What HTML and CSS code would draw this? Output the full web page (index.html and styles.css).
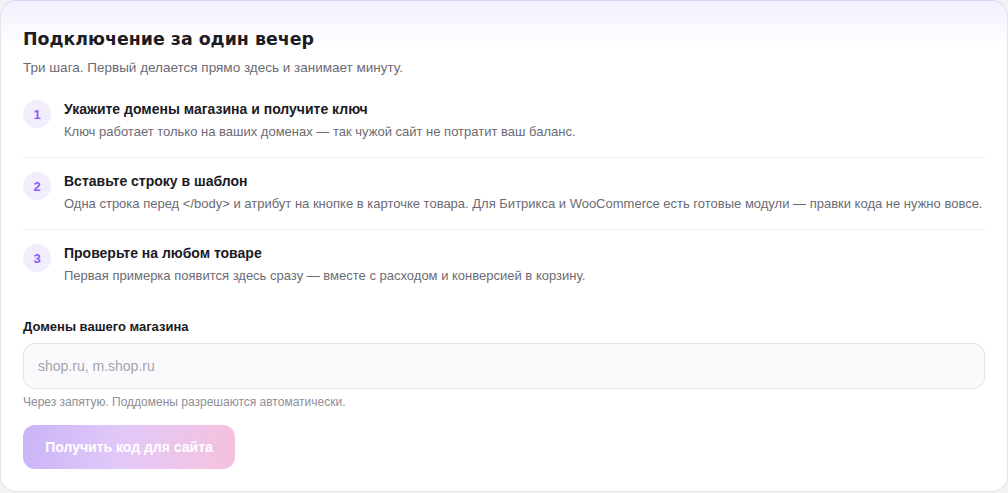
FILE: index.html
```html
<!DOCTYPE html>
<html lang="ru">
<head>
<meta charset="utf-8">
<title>Подключение</title>
<link rel="stylesheet" href="styles.css">
</head>
<body>
<section class="card">
  <h2 class="title">Подключение за один вечер</h2>
  <p class="subtitle">Три шага. Первый делается прямо здесь и занимает минуту.</p>
  <ol class="steps">
    <li class="step">
      <span class="badge">1</span>
      <div class="step-body">
        <div class="step-title">Укажите домены магазина и получите ключ</div>
        <div class="step-desc">Ключ работает только на ваших доменах — так чужой сайт не потратит ваш баланс.</div>
      </div>
    </li>
    <li class="step">
      <span class="badge">2</span>
      <div class="step-body">
        <div class="step-title">Вставьте строку в шаблон</div>
        <div class="step-desc">Одна строка перед &lt;/body&gt; и атрибут на кнопке в карточке товара. Для Битрикса и WooCommerce есть готовые модули — правки кода не нужно вовсе.</div>
      </div>
    </li>
    <li class="step">
      <span class="badge">3</span>
      <div class="step-body">
        <div class="step-title">Проверьте на любом товаре</div>
        <div class="step-desc">Первая примерка появится здесь сразу — вместе с расходом и конверсией в корзину.</div>
      </div>
    </li>
  </ol>
  <label class="field-label" for="domains">Домены вашего магазина</label>
  <input class="field" id="domains" type="text" placeholder="shop.ru, m.shop.ru">
  <p class="hint">Через запятую. Поддомены разрешаются автоматически.</p>
  <button class="btn" type="button" disabled>Получить код для сайта</button>
</section>
</body>
</html>
```

FILE: styles.css
```css
* { box-sizing: border-box; }
html, body { margin: 0; padding: 0; }
body {
  background: #f3f3f6;
  font-family: "Liberation Sans", Arial, sans-serif;
  color: #1b1b21;
  height: 493px;
}
.card {
  width: 1008px;
  height: 492px;
  border: 1px solid #e6e5ec;
  border-top-color: #ddd6f3;
  border-radius: 16px;
  background: linear-gradient(180deg, #f2eefc 0px, #fbfaff 28px, #ffffff 48px);
  padding: 26px 22px 0 22px;
  display: flex;
  flex-direction: column;
  align-items: flex-start;
}
.title {
  margin: 0;
  font-family: "DejaVu Sans", sans-serif;
  font-weight: 700;
  font-size: 17.4px;
  line-height: 24px;
  color: #1c1c22;
}
.subtitle {
  margin: 9px 0 0;
  font-size: 13.5px;
  line-height: 16px;
  color: #6b6b74;
}
.steps {
  list-style: none;
  margin: 10px 0 0;
  padding: 0;
  width: 100%;
}
.step {
  display: flex;
  gap: 13px;
  padding: 13px 0 15px;
  border-bottom: 1px solid #eeedf2;
}
.step:last-child { border-bottom: none; }
.badge {
  flex: none;
  width: 28px;
  height: 28px;
  margin-top: 1px;
  border-radius: 50%;
  background: #f2edfd;
  color: #8b5cf6;
  font-weight: 700;
  font-size: 13px;
  display: flex;
  align-items: center;
  justify-content: center;
}
.step-body { display: flex; flex-direction: column; gap: 3px; }
.step-title {
  font-weight: 700;
  font-size: 14px;
  line-height: 20px;
  color: #1a1a1f;
}
.step-desc {
  font-size: 13px;
  line-height: 20px;
  color: #6b6b74;
}
.field-label {
  margin-top: 18px;
  font-weight: 700;
  font-size: 13px;
  line-height: 16px;
  color: #1b1b21;
}
.field {
  margin-top: 8px;
  width: 100%;
  height: 46px;
  border: 1px solid #e3e1ec;
  border-radius: 12px;
  background: #fafafd;
  padding: 0 14px;
  font-family: "Liberation Sans", Arial, sans-serif;
  font-size: 14px;
  color: #1b1b21;
  outline: none;
}
.field::placeholder { color: #a3a3ad; }
.hint {
  margin: 6px 0 0;
  font-size: 12px;
  line-height: 14px;
  color: #8e8e98;
}
.btn {
  margin-top: 16px;
  width: 212px;
  height: 44px;
  border: none;
  border-radius: 12px;
  background: linear-gradient(100deg, #c9b3f8 0%, #e1c8f8 45%, #f6c1dd 100%);
  color: #ffffff;
  font-family: "Liberation Sans", Arial, sans-serif;
  font-weight: 700;
  font-size: 14px;
  cursor: not-allowed;
}
```
